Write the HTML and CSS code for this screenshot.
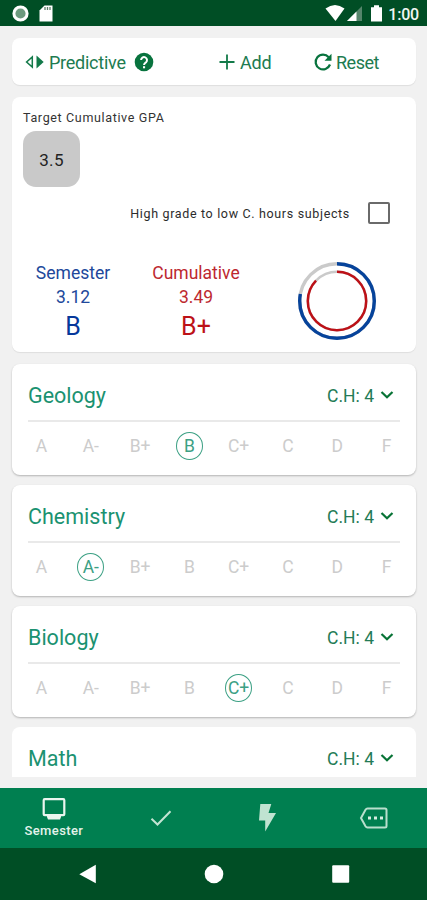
FILE: index.html
```html
<!DOCTYPE html>
<html lang="en">
<head>
<meta charset="utf-8">
<title>GPA Calculator</title>
<link rel="stylesheet" href="styles.css">
</head>
<body>
<div class="screen">
  <header class="status">
    <svg class="status-icons" width="60" height="26" viewBox="0 0 60 26">
      <circle cx="20.500" cy="13.500" r="6.600" fill="#6c9a7e" stroke="#fff" stroke-width="3"/>
      <path d="M44.500 5.500H52.500V21.500H39.500V10.500Z" fill="#fff"/>
      <path d="M45 7v3M47.500 7v3M50 7v3" stroke="#5d7f68" stroke-width="1.300"/>
    </svg>
    <div class="status-right">
      <svg width="62" height="26" viewBox="325 0 62 26">
        <path d="M325.500 8.500Q335 1.500 344.500 8.500L335.500 21Z" fill="#fff"/>
        <path d="M362 6V21H347Z" fill="#55856b"/>
        <path d="M356.500 11.500V21H347Z" fill="#fff"/>
        <path d="M371 7.300H374V5.300H379V7.300H382V21.500H371Z" fill="#fff"/>
      </svg>
      <span class="clock">1:00</span>
    </div>
  </header>

  <main class="content">
    <section class="card toolbar">
      <div class="tool predictive">
        <svg width="20" height="18" viewBox="0 0 20 18"><path d="M7.300 4V14L1.600 9Z" fill="none" stroke="#137a49" stroke-width="1.500"/><path d="M11.500 2.500V15.500L18.700 9Z" fill="#137a49"/></svg>
        <span>Predictive</span>
        <svg class="help" width="20" height="20" viewBox="0 0 20 20"><circle cx="10" cy="10" r="9.300" fill="#08733e"/><path d="M7.100 8.100a2.950 2.950 0 1 1 5 2.100c-1.300 1.150-2.050 1.500-2.050 2.700" fill="none" stroke="#fff" stroke-width="2"/><path d="M9 14.200h2.100v2.100H9z" fill="#fff"/></svg>
      </div>
      <div class="tool add">
        <svg width="16" height="16" viewBox="0 0 16 16"><path d="M8 .5V15.500M.5 8H15.500" stroke="#137a49" stroke-width="1.800"/></svg>
        <span>Add</span>
      </div>
      <div class="tool reset">
        <svg width="20" height="20" viewBox="0 0 20 20"><path d="M15.700 5.200A7.400 7.400 0 1 0 17 12.500" fill="none" stroke="#08733e" stroke-width="2.200"/><path d="M18.500 1.800V8.700H11.500Z" fill="#08733e"/></svg>
        <span>Reset</span>
      </div>
    </section>

    <section class="card summary">
      <div class="target-label">Target Cumulative GPA</div>
      <div class="target">3.5</div>
      <div class="option"><span>High grade to low C. hours subjects</span><i class="checkbox"></i></div>
      <div class="results">
        <div class="result semester"><span>Semester</span><span>3.12</span><b>B</b></div>
        <div class="result cumulative"><span>Cumulative</span><span>3.49</span><b>B+</b></div>
        <svg class="rings" width="80" height="80" viewBox="-40 -40 80 80" fill="none">
          <g transform="rotate(-90)">
            <circle r="37.300" stroke="#cacaca" stroke-width="3.400"/>
            <circle r="37.300" stroke="#06439b" stroke-width="3.400" pathLength="100" stroke-dasharray="78 22"/>
            <circle r="29.200" stroke="#cacaca" stroke-width="2.500"/>
            <circle r="29.200" stroke="#bd1117" stroke-width="2.500" pathLength="100" stroke-dasharray="87.250 12.750"/>
          </g>
        </svg>
      </div>
    </section>

    <section class="card subject">
      <div class="subject-head"><h2>Geology</h2><span class="hours">C.H: 4</span><svg class="chevron" width="14" height="10" viewBox="0 0 14 10"><path d="M1.500 2 7 7.300 12.500 2"/></svg></div>
      <div class="grades"><span>A</span><span>A-</span><span>B+</span><span class="picked">B</span><span>C+</span><span>C</span><span>D</span><span>F</span></div>
    </section>
    <section class="card subject">
      <div class="subject-head"><h2>Chemistry</h2><span class="hours">C.H: 4</span><svg class="chevron" width="14" height="10" viewBox="0 0 14 10"><path d="M1.500 2 7 7.300 12.500 2"/></svg></div>
      <div class="grades"><span>A</span><span class="picked">A-</span><span>B+</span><span>B</span><span>C+</span><span>C</span><span>D</span><span>F</span></div>
    </section>
    <section class="card subject">
      <div class="subject-head"><h2>Biology</h2><span class="hours">C.H: 4</span><svg class="chevron" width="14" height="10" viewBox="0 0 14 10"><path d="M1.500 2 7 7.300 12.500 2"/></svg></div>
      <div class="grades"><span>A</span><span>A-</span><span>B+</span><span>B</span><span class="picked">C+</span><span>C</span><span>D</span><span>F</span></div>
    </section>
    <section class="card subject cut">
      <div class="subject-head"><h2>Math</h2><span class="hours">C.H: 4</span><svg class="chevron" width="14" height="10" viewBox="0 0 14 10"><path d="M1.500 2 7 7.300 12.500 2"/></svg></div>
    </section>
  </main>

  <nav class="tabs">
    <div class="tab active">
      <svg width="24" height="23" viewBox="0 0 24 23"><rect x="1.700" y="2.200" width="20.600" height="16" rx="1" fill="none" stroke="#eaf6ef" stroke-width="2.200"/><path d="M5 18H19V20L18 22.500H6L5 20Z" fill="#eaf6ef"/></svg>
      <span>Semester</span>
    </div>
    <div class="tab"><svg width="24" height="30" viewBox="0 0 24 30"><path d="M2.500 15.800 8.500 21.500 21.500 8.200" fill="none" stroke="#c3e4d3" stroke-width="2"/></svg></div>
    <div class="tab"><svg width="24" height="30" viewBox="0 0 24 30"><path d="M5.300 1H16.300L13.500 10H21L10.200 28.500V17.500H4Z" fill="#c0e3d1"/></svg></div>
    <div class="tab"><svg width="30" height="24" viewBox="0 0 30 24"><path d="M8.500 2.500H26Q27.500 2.500 27.500 4V20Q27.500 21.500 26 21.500H8.500Q7.300 21.500 6.500 20.300L2 12 6.500 3.700Q7.300 2.500 8.500 2.500Z" fill="none" stroke="#b9dfcd" stroke-width="2"/><path d="M9 10.500h3v3H9zM15 10.500h3v3h-3zM21 10.500h3v3h-3z" fill="#d6ede1"/></svg></div>
  </nav>
  <footer class="system">
    <svg width="20" height="20" viewBox="0 0 20 20"><path d="M19.800 .8V19.200L3.300 10.200Z" fill="#fff"/></svg>
    <svg width="20" height="20" viewBox="0 0 20 20"><circle cx="10" cy="10" r="9.300" fill="#fff"/></svg>
    <svg width="20" height="20" viewBox="0 0 20 20"><rect x="1.200" y="1.200" width="17" height="17.600" rx="1" fill="#fff"/></svg>
  </footer>
</div>
</body>
</html>
```
FILE: styles.css
```css
* { box-sizing: border-box; }
body { margin: 0; font-family: Roboto, "Liberation Sans", sans-serif; }
svg { display: block; flex: none; }
.screen { width: 427px; height: 900px; display: flex; flex-direction: column; background: #f1f1f1; overflow: hidden; }

.status { flex: none; height: 26px; display: flex; justify-content: space-between; background: #004e25; }
.status-right { display: flex; padding-right: 8px; }
.clock { width: 32px; font-size: 16px; font-weight: 500; line-height: 29px; letter-spacing: -.2px; color: #f0f6f2; white-space: nowrap; text-align: right; }

.content { flex: none; height: 762px; padding: 12px 11px 0 12px; }
.card { background: #fff; border-radius: 8px; box-shadow: 0 1px 1px rgba(0, 0, 0, .08); }

.toolbar { height: 47px; display: flex; align-items: center; color: #207b50; font-size: 18px; line-height: 24px; }
.tool { display: flex; align-items: center; padding-top: 1px; }
.tool span { padding-top: 2px; }
.predictive { width: 207px; padding-left: 13px; }
.predictive span { width: 78px; margin-left: 4px; letter-spacing: -.25px; }
.help { margin: -1px 0 0 7px; }
.add { width: 94px; }
.add span { margin-left: 5px; letter-spacing: -.2px; }
.reset span { margin-left: 3px; letter-spacing: -.5px; }

.summary { height: 255px; margin-top: 12px; padding: 12px 11px 0; }
.target-label { height: 16px; font-size: 12.5px; line-height: 17px; letter-spacing: .65px; color: #333; }
.target { width: 57px; height: 56px; margin-top: 6px; border-radius: 13px; background: #c9c9c9; color: #222; font-size: 17px; line-height: 58px; letter-spacing: .3px; text-align: center; }
.option { height: 22px; margin-top: 15px; display: flex; justify-content: flex-end; align-items: center; font-size: 12.5px; line-height: 20px; letter-spacing: .66px; color: #2c2c2c; padding-right: 15px; }
.option span { padding-top: 1px; }
.checkbox { width: 22px; height: 22px; margin-left: 18px; border: 2px solid #6a6a6a; border-radius: 2px; }
.results { display: flex; margin-top: 36px; }
.result { display: flex; flex-direction: column; align-items: center; white-space: nowrap; font-size: 17.5px; line-height: 24px; padding-top: 1px; }
.result b { font-size: 25px; line-height: 36px; font-weight: 400; }
.semester { width: 100px; color: #21489b; }
.cumulative { width: 146px; color: #bd2830; }
.semester b { color: #06389b; }
.cumulative b { color: #bd1117; }
.rings { margin: 1px 0 0 28px; }

.subject { height: 111px; margin-top: 10px; padding: 0 16px; box-shadow: 0 1px 2px rgba(0, 0, 0, .25); }
.summary + .subject { margin-top: 12px; }
.subject-head { height: 58px; display: flex; align-items: center; border-bottom: 2px solid #e9e9e9; padding-top: 6px; }
h2 { flex: 1; margin: 0; padding-top: 2px; font-size: 21.5px; line-height: 28px; font-weight: 400; color: #1b9271; }
.hours { color: #247b56; font-size: 17.5px; line-height: 24px; margin-top: 1px; }
.chevron { margin: -1px 6px 0 6px; fill: none; stroke: #087336; stroke-width: 2.2; }
.grades { display: flex; justify-content: space-between; height: 48px; align-items: center; }
.grades span { width: 27px; height: 27px; font-size: 17.5px; line-height: 26px; color: #ccc; display: flex; justify-content: center; white-space: nowrap; }
.grades .picked { border: 1.5px solid #3ca084; border-radius: 50%; color: #3ca084; height: 28px; line-height: 27px; }
.cut { height: 50px; border-radius: 8px 8px 0 0; box-shadow: none; overflow: hidden; }

.tabs { flex: none; height: 60px; display: grid; grid-template-columns: repeat(4, 1fr); background: #007f50; }
.tab { display: flex; flex-direction: column; align-items: center; justify-content: center; color: #e4f3eb; font-size: 13px; font-weight: 500; padding-left: 1px; }
.active { justify-content: flex-start; padding-top: 9px; }
.active span { line-height: 17px; margin-top: 2px; letter-spacing: .4px; }
.system { flex: none; height: 52px; display: flex; justify-content: space-between; align-items: center; padding: 0 76px; background: #004e25; }
```
